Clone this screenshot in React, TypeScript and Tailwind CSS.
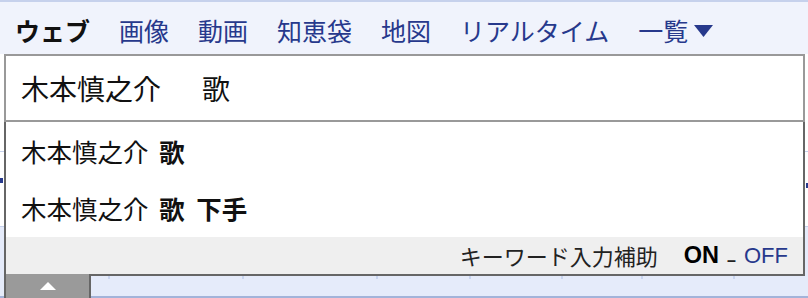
import React from "react";

const tabs = ["画像", "動画", "知恵袋", "地図", "リアルタイム"];

export default function App() {
  return (
    <div className="relative w-[808px] h-[298px] overflow-hidden bg-white font-['Liberation_Sans','Noto_Sans_CJK_JP',sans-serif] text-[#111]">
      <div className="h-[2px] bg-[#c6d1ec]" />
      <div className="h-[52px] bg-[#f0f3fc] flex items-start pt-[13px] pl-[15px] gap-[29px] text-[25px] leading-[30px] font-['Noto_Sans_CJK_JP',sans-serif]">
        <span className="font-bold text-[#111]">ウェブ</span>
        {tabs.map((t) => (
          <span key={t} className="text-[#27398c]">
            {t}
          </span>
        ))}
        <span className="text-[#27398c] flex items-center">
          一覧
          <svg width="19" height="15" viewBox="0 0 19 15" className="ml-[6px] mt-[1px]">
            <polygon points="0,2 19,2 9.5,14" fill="#27398c" />
          </svg>
        </span>
      </div>

      <div className="relative ml-[4px] w-[801px] z-10">
        <div className="h-[68px] border-2 border-[#999] bg-white flex items-center pl-[15px] text-[28px] font-['Noto_Sans_CJK_JP',sans-serif]">
          木本慎之介<span className="ml-[13px]">　歌</span>
        </div>
        <div className="absolute top-full left-0 w-full border-x-2 border-b-2 border-[#666] bg-white font-['Noto_Sans_CJK_JP',sans-serif]">
          <div className="h-[57.5px] flex items-center pl-[15px] text-[25.5px]">
            木本慎之介&nbsp;<span className="font-bold ml-[5px]">歌</span>
          </div>
          <div className="h-[57.5px] flex items-center pl-[15px] text-[25.5px]">
            木本慎之介&nbsp;<span className="font-bold ml-[5px]">歌&nbsp;&nbsp;下手</span>
          </div>
          <div className="h-[37px] bg-[#efefef] flex items-center justify-end pr-[15px] text-[22px] text-[#222]">
            <span>キーワード入力補助</span>
            <span className="ml-[26px] text-[23.5px] font-bold text-black font-['Liberation_Sans',sans-serif]">ON</span>
            <span className="ml-[8px] text-[16px] font-bold leading-none translate-y-[5px] font-['Liberation_Sans',sans-serif]">–</span>
            <span className="ml-[8px] text-[#27398c] font-['Liberation_Sans',sans-serif]">OFF</span>
          </div>
          <div className="absolute top-full left-[-2px] w-[87px] h-[24px] border-x-2 border-[#666] bg-[#9a9a9a] flex justify-center pt-[8px]">
            <svg width="16" height="8" viewBox="0 0 16 8">
              <polygon points="8,0 16,8 0,8" fill="#fff" />
            </svg>
          </div>
        </div>
      </div>

      <div className="h-[104px] bg-white flex flex-col">
        <div className="mt-[29px] h-[1px] bg-[#c6d1ec]" />
        <div className="flex justify-between items-start mt-[26px]">
          <div className="w-[3px] h-[5px] bg-[#27398c]" />
          <div className="w-[2px] h-[5px] mt-[5px] bg-[#27398c]" />
        </div>
      </div>

      <div className="h-[72px] bg-[#e5ebfa] border-t border-[#c6d1ec] border-b-2 border-b-[#a3b3d9]">
        <div className="flex mt-[49px] pl-[108px] h-[3px]">
          <div className="w-[134px] border-l-2 border-[#c9d5f0]" />
          <div className="w-[134px] border-l-2 border-[#c9d5f0]" />
          <div className="w-[93px] border-l-2 border-[#c9d5f0]" />
          <div className="w-[92px] border-l-2 border-[#c9d5f0]" />
          <div className="w-[80px] border-l-2 border-[#c9d5f0]" />
          <div className="w-[92px] border-l-2 border-[#c9d5f0]" />
          <div className="w-[2px] border-l-2 border-[#c9d5f0]" />
        </div>
      </div>
    </div>
  );
}
